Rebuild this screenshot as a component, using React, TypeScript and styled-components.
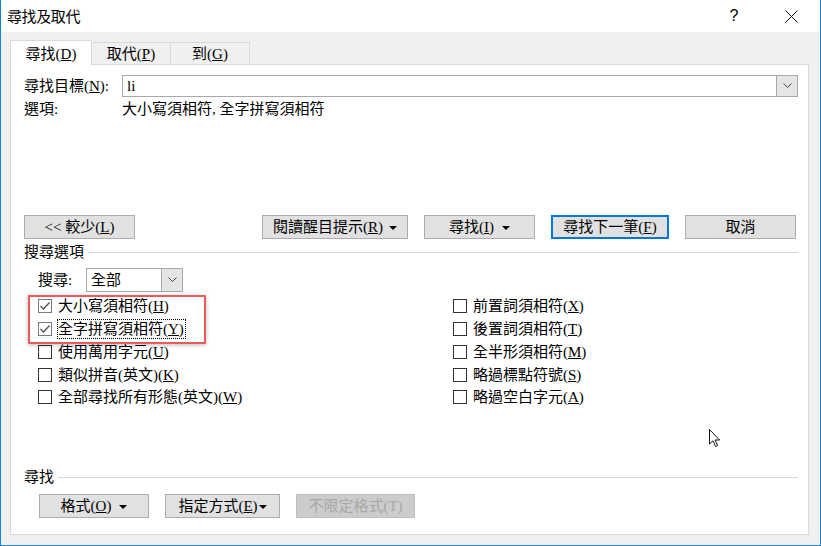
import React from 'react';
import styled, { createGlobalStyle } from 'styled-components';

const GlobalStyle = createGlobalStyle`
  html, body {
    margin: 0;
    padding: 0;
    background: #ffffff;
  }
  body {
    font-family: 'Liberation Serif', 'Noto Sans CJK TC', serif;
    font-size: 15px;
    color: #000;
  }
`;

const Window = styled.div`
  position: relative;
  width: 821px;
  height: 546px;
  box-sizing: border-box;
  border: 1px solid #1883d7;
  border-top: none;
  display: flex;
  flex-direction: column;
  background: #f0f0f0;
  overflow: hidden;
`;

const TitleBar = styled.div`
  height: 32px;
  flex: none;
  background: #ffffff;
  display: flex;
  align-items: center;
  padding-left: 6px;
`;

const Title = styled.span`
  font-family: 'Noto Sans CJK TC', sans-serif;
  font-size: 15px;
  line-height: 20px;
  letter-spacing: -0.4px;
`;

const TitleControls = styled.div`
  margin-left: auto;
  display: flex;
  align-items: center;
  padding-right: 6px;
`;

const HelpButton = styled.span`
  width: 20px;
  text-align: center;
  font-family: 'Liberation Sans', sans-serif;
  font-size: 16px;
  margin-right: 24px;
`;

const CloseButton = styled.span`
  width: 46px;
  height: 32px;
  display: flex;
  align-items: center;
  justify-content: center;
`;

const Body = styled.div`
  flex: 1;
  display: flex;
  flex-direction: column;
  padding: 8px 11px 10px 9px;
`;

const TabRow = styled.div`
  display: flex;
  align-items: flex-end;
  height: 25px;
  margin-bottom: -1px;
  position: relative;
  z-index: 1;
`;

const Tab = styled.div<{ $active?: boolean; $width: number }>`
  box-sizing: border-box;
  width: ${(p) => p.$width}px;
  height: ${(p) => (p.$active ? 25 : 22)}px;
  margin-bottom: ${(p) => (p.$active ? 0 : 1)}px;
  background: ${(p) => (p.$active ? '#ffffff' : '#f0f0f0')};
  border: 1px solid #d9d9d9;
  border-bottom: none;
  border-left: ${(p) => (p.$active ? '1px solid #d9d9d9' : 'none')};
  display: flex;
  align-items: center;
  justify-content: center;
  line-height: 20px;
  padding-top: ${(p) => (p.$active ? 1 : 0)}px;
`;

const Panel = styled.div`
  flex: 1;
  background: #ffffff;
  border: 1px solid #d9d9d9;
  display: flex;
  flex-direction: column;
  padding: 10px 10px 16px 13px;
`;

const FieldRow = styled.div`
  display: flex;
  align-items: center;
  height: 22px;
`;

const FieldLabel = styled.span`
  width: 98px;
  flex: none;
  line-height: 20px;
`;

const Combo = styled.div<{ $width?: number }>`
  box-sizing: border-box;
  height: 100%;
  ${(p) => (p.$width ? `width: ${p.$width}px;` : 'flex: 1;')}
  border: 1px solid #a9a9a9;
  background: #ffffff;
  display: flex;
  align-items: stretch;
`;

const ComboValue = styled.span`
  flex: 1;
  display: flex;
  align-items: center;
  padding-left: 4px;
  line-height: 20px;
`;

const ComboButton = styled.span`
  width: 20px;
  flex: none;
  background: #e5e5e5;
  border-left: 1px solid #a9a9a9;
  display: flex;
  align-items: center;
  justify-content: center;
`;

const OptionsRow = styled.div`
  display: flex;
  align-items: center;
  height: 20px;
  margin-top: 2px;
  line-height: 20px;
`;

const ButtonRow = styled.div`
  display: flex;
  align-items: center;
  margin-top: 96px;
  height: 24px;
`;

const ButtonGroup = styled.div<{ $gap: number }>`
  display: flex;
  gap: ${(p) => p.$gap}px;
  margin-left: auto;
  padding-right: 2px;
`;

const Button = styled.button<{ $width: number; $default?: boolean }>`
  box-sizing: border-box;
  width: ${(p) => p.$width}px;
  height: 24px;
  padding: 0;
  margin: 0;
  background: #e1e1e1;
  border: ${(p) => (p.$default ? '2px solid #0078d7' : '1px solid #adadad')};
  font-family: 'Liberation Serif', 'Noto Sans CJK TC', serif;
  font-size: 15px;
  line-height: 20px;
  color: #000;
  display: flex;
  align-items: center;
  justify-content: center;
  &:disabled {
    background: #cccccc;
    border-color: #bfbfbf;
    color: #a8a8a8;
  }
`;

const Caret = styled.span<{ $gap?: number }>`
  display: inline-block;
  width: 0;
  height: 0;
  border-left: 4px solid transparent;
  border-right: 4px solid transparent;
  border-top: 4px solid #000;
  margin-left: ${(p) => p.$gap ?? 8}px;
  margin-top: 2px;
`;

const Ak = styled.u`
  text-underline-offset: 1px;
`;

const SectionHeader = styled.div<{ $top?: string }>`
  display: flex;
  align-items: center;
  height: 20px;
  margin-top: ${(p) => p.$top ?? '3px'};
  line-height: 20px;
`;

const SectionLine = styled.span`
  flex: 1;
  height: 1px;
  background: #d6d6d6;
  margin-left: 4px;
`;

const SearchRow = styled.div`
  display: flex;
  align-items: center;
  height: 24px;
  margin-top: 6px;
  padding-left: 14px;
`;

const SearchLabel = styled.span`
  width: 48px;
  line-height: 20px;
`;

const CheckGrid = styled.div`
  position: relative;
  display: grid;
  grid-template-columns: 415px 1fr;
  grid-auto-rows: 22.75px;
  margin-top: 3px;
  padding-left: 14px;
`;

const CheckItem = styled.label`
  display: flex;
  align-items: center;
  gap: 6px;
  line-height: 18px;
`;

const Box = styled.span<{ $checked?: boolean }>`
  box-sizing: border-box;
  width: 14px;
  height: 14px;
  flex: none;
  background: #ffffff;
  border: 1px solid ${(p) => (p.$checked ? '#7a7a7a' : '#333333')};
  display: flex;
  align-items: center;
  justify-content: center;
`;

const CheckText = styled.span<{ $focused?: boolean }>`
  outline: ${(p) => (p.$focused ? '1px dotted #000' : 'none')};
  outline-offset: 0;
  padding-right: 1px;
`;

const Highlight = styled.div`
  position: absolute;
  left: 4px;
  top: 0;
  width: 178px;
  height: 49px;
  box-sizing: border-box;
  border: 2px solid #ec5b5b;
  border-radius: 1px;
  box-shadow: 0 1px 4px rgba(0, 0, 0, 0.28);
  pointer-events: none;
`;

const BottomSection = styled.div`
  margin-top: auto;
  display: flex;
  flex-direction: column;
`;

const FormatRow = styled.div`
  display: flex;
  gap: 16px;
  margin-top: 7px;
  padding-left: 15px;
`;

const Cursor = styled.svg`
  position: absolute;
  left: 707px;
  top: 428px;
`;

const Chevron = () => (
  <svg width="9" height="6" viewBox="0 0 9 6">
    <polyline points="0.5,0.5 4.5,4.5 8.5,0.5" fill="none" stroke="#444" strokeWidth="1" />
  </svg>
);

const Check = () => (
  <svg width="12" height="12" viewBox="0 0 12 12">
    <polyline points="1.5,6 4.5,9 10.5,2.5" fill="none" stroke="#555" strokeWidth="1.4" />
  </svg>
);

interface Option {
  label: string;
  key: string;
  checked?: boolean;
  focused?: boolean;
}

const leftOptions: Option[] = [
  { label: '大小寫須相符', key: 'H', checked: true },
  { label: '全字拼寫須相符', key: 'Y', checked: true, focused: true },
  { label: '使用萬用字元', key: 'U' },
  { label: '類似拼音(英文)', key: 'K' },
  { label: '全部尋找所有形態(英文)', key: 'W' },
];

const rightOptions: Option[] = [
  { label: '前置詞須相符', key: 'X' },
  { label: '後置詞須相符', key: 'T' },
  { label: '全半形須相符', key: 'M' },
  { label: '略過標點符號', key: 'S' },
  { label: '略過空白字元', key: 'A' },
];

function OptionCheck({ opt }: { opt: Option }) {
  return (
    <CheckItem>
      <Box $checked={opt.checked}>{opt.checked && <Check />}</Box>
      <CheckText $focused={opt.focused}>
        {opt.label}(<Ak>{opt.key}</Ak>)
      </CheckText>
    </CheckItem>
  );
}

export default function App() {
  const rows = leftOptions.map((l, i) => [l, rightOptions[i]]);

  return (
    <>
      <GlobalStyle />
      <Window>
        <TitleBar>
          <Title>尋找及取代</Title>
          <TitleControls>
            <HelpButton>?</HelpButton>
            <CloseButton>
              <svg width="13" height="13" viewBox="0 0 13 13">
                <path d="M0.5 0.5 L12.5 12.5 M12.5 0.5 L0.5 12.5" stroke="#111" strokeWidth="1" />
              </svg>
            </CloseButton>
          </TitleControls>
        </TitleBar>
        <Body>
          <TabRow>
            <Tab $active $width={82}>
              尋找(<Ak>D</Ak>)
            </Tab>
            <Tab $width={79}>
              取代(<Ak>P</Ak>)
            </Tab>
            <Tab $width={79}>
              到(<Ak>G</Ak>)
            </Tab>
          </TabRow>
          <Panel>
            <FieldRow>
              <FieldLabel>
                尋找目標(<Ak>N</Ak>):
              </FieldLabel>
              <Combo>
                <ComboValue>li</ComboValue>
                <ComboButton>
                  <Chevron />
                </ComboButton>
              </Combo>
            </FieldRow>
            <OptionsRow>
              <FieldLabel>選項:</FieldLabel>
              <span>大小寫須相符, 全字拼寫須相符</span>
            </OptionsRow>

            <ButtonRow>
              <Button $width={111}>
                &lt;&lt; 較少(<Ak>L</Ak>)
              </Button>
              <ButtonGroup $gap={16}>
                <Button $width={146}>
                  閱讀醒目提示(<Ak>R</Ak>)
                  <Caret $gap={6} />
                </Button>
                <Button $width={111}>
                  尋找(<Ak>I</Ak>)
                  <Caret />
                </Button>
                <Button $width={118} $default>
                  尋找下一筆(<Ak>F</Ak>)
                </Button>
                <Button $width={111}>取消</Button>
              </ButtonGroup>
            </ButtonRow>

            <SectionHeader>
              搜尋選項
              <SectionLine />
            </SectionHeader>
            <SearchRow>
              <SearchLabel>搜尋:</SearchLabel>
              <Combo $width={97}>
                <ComboValue>全部</ComboValue>
                <ComboButton>
                  <Chevron />
                </ComboButton>
              </Combo>
            </SearchRow>
            <CheckGrid>
              {rows.map(([l, r]) => (
                <React.Fragment key={l.key}>
                  <OptionCheck opt={l} />
                  <OptionCheck opt={r} />
                </React.Fragment>
              ))}
              <Highlight />
            </CheckGrid>

            <BottomSection>
              <SectionHeader $top="0">
                尋找
                <SectionLine />
              </SectionHeader>
              <FormatRow>
                <Button $width={110}>
                  格式(<Ak>O</Ak>)
                  <Caret />
                </Button>
                <Button $width={115}>
                  指定方式(<Ak>E</Ak>)
                  <Caret $gap={1} />
                </Button>
                <Button $width={119} disabled>
                  不限定格式(T)
                </Button>
              </FormatRow>
            </BottomSection>
          </Panel>
        </Body>
        <Cursor width="13" height="20" viewBox="0 0 13 20">
          <path
            d="M1.5 1.5 L1.5 16 L5 12.8 L7.6 18.5 L9.6 17.6 L7.1 12 L11.6 12 Z"
            fill="#fff"
            stroke="#111"
            strokeWidth="1"
            strokeLinejoin="round"
          />
        </Cursor>
      </Window>
    </>
  );
}
